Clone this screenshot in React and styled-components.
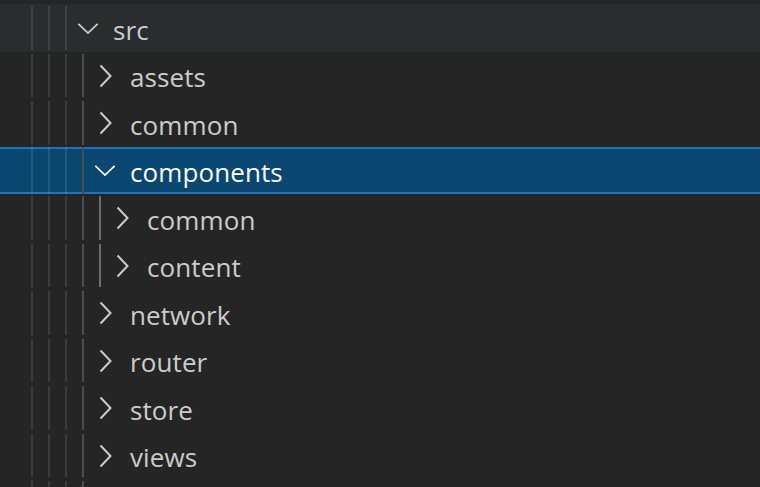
import React from "react";
import styled, { createGlobalStyle } from "styled-components";

const Global = createGlobalStyle`
 html, body {
  margin: 0;
  padding: 0;
  background: #252526;
 }
 body {
  font-family: "Open Sans", "Noto Sans", sans-serif;
 }
`;

const Tree = styled.div`
 width: 760px;
 height: 487px;
 overflow: hidden;
 padding-top: 4px;
 box-sizing: border-box;
 background: #252526;
`;

const Row = styled.div`
 display: flex;
 align-items: center;
 height: 47.5px;
 box-sizing: border-box;
 padding-left: 26px;
 background: ${(p) => (p.selected ? "#094771" : p.hover ? "#2a2d2e" : "transparent")};
 border-top: 2px solid ${(p) => (p.selected ? "#1e73ba" : "transparent")};
 border-bottom: 2px solid ${(p) => (p.selected ? "#1e73ba" : "transparent")};
 color: ${(p) => (p.selected ? "#ffffff" : "#cccccc")};
`;

const Slot = styled.div`
 width: 17px;
 flex: none;
 display: flex;
 align-self: stretch;
 margin: ${(p) => (p.selected ? "-2px 0" : "0")};
 &::before {
  content: "";
  display: block;
  margin-left: 5px;
  width: 2px;
  background: ${(p) =>
   p.tone === "active" ? "#6e6e6e" : p.tone === "mid" ? "#4c4c4c" : "rgba(255,255,255,0.1)"};
 }
`;

const Twistie = styled.div`
 width: 22px;
 flex: none;
 display: flex;
 align-items: center;
 justify-content: center;
 margin-right: 14px;
 margin-top: 1px;
 color: inherit;
`;

const Label = styled.span`
 font-size: 26px;
 line-height: 1;
 white-space: nowrap;
 margin-top: 4px;
 letter-spacing: 0.1px;
`;

function Chevron({ open }) {
 if (open) {
  return (
   <svg width="24" height="13" viewBox="0 0 24 13">
    <path d="M1.5 1.5 L12 11.5 L22.5 1.5" fill="none" stroke="currentColor" strokeWidth="2" />
   </svg>
  );
 }
 return (
  <svg width="13" height="24" viewBox="0 0 13 24">
   <path d="M1.5 1.5 L11.5 12 L1.5 22.5" fill="none" stroke="currentColor" strokeWidth="2" />
  </svg>
 );
}

const items = [
 { name: "src", depth: 0, open: true, hover: true },
 { name: "assets", depth: 1 },
 { name: "common", depth: 1 },
 { name: "components", depth: 1, open: true, selected: true },
 { name: "common", depth: 2 },
 { name: "content", depth: 2 },
 { name: "network", depth: 1 },
 { name: "router", depth: 1 },
 { name: "store", depth: 1 },
 { name: "views", depth: 1 },
 { name: "", depth: 1 },
];

export default function App() {
 return (
  <Tree>
   <Global />
   {items.map((it, i) => {
    const slots = [];
    for (let d = 0; d < it.depth + 3; d++) {
     let tone = "dim";
     if (d === 3) tone = "mid";
     if (d === 4) tone = "active";
     slots.push(<Slot key={d} tone={tone} selected={it.selected} />);
    }
    return (
     <Row key={i} selected={it.selected} hover={it.hover}>
      {slots}
      {it.name && (
       <>
        <Twistie>
         <Chevron open={it.open} />
        </Twistie>
        <Label>{it.name}</Label>
       </>
      )}
     </Row>
    );
   })}
  </Tree>
 );
}
